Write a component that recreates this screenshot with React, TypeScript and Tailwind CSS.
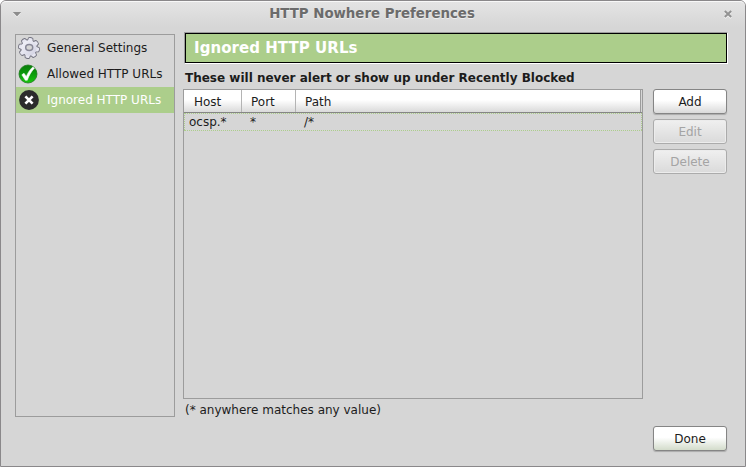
import React from "react";

function Gear() {
  const teeth = Array.from({ length: 8 }, (_, i) => i * 45 + 10);
  return (
    <svg width="24" height="24" viewBox="0 0 24 24">
      <defs>
        <linearGradient id="metal" x1="0" y1="0" x2="1" y2="1">
          <stop offset="0" stopColor="#f6f6fc" />
          <stop offset="1" stopColor="#cfcfe0" />
        </linearGradient>
      </defs>
      <g stroke="#70707e" strokeWidth="1.700" strokeLinejoin="round" fill="#ececf4">
        {teeth.map((a) => (
          <path key={a} d="M9.400 5.500 10.200 2.200Q12 1.400 13.800 2.200l.8 3.300z" transform={`rotate(${a} 12 12)`} />
        ))}
        <circle cx="12" cy="12" r="7.600" />
      </g>
      <g fill="#e6e6f0">
        {teeth.map((a) => (
          <path key={a} d="M9.400 6 10.200 2.200Q12 1.400 13.800 2.200l.8 3.800z" transform={`rotate(${a} 12 12)`} />
        ))}
      </g>
      <circle cx="12" cy="12" r="7.700" fill="url(#metal)" />
      <ellipse cx="12.200" cy="11.600" rx="3.500" ry="3" fill="#d6d6d6" stroke="#888898" strokeWidth="1.500" />
    </svg>
  );
}

function Check() {
  return (
    <svg width="20" height="20" viewBox="0 0 20 20" className="-ml-[2px]">
      <defs>
        <linearGradient id="green" x1="0" y1="0" x2="0" y2="1">
          <stop offset="0" stopColor="#0a7d0a" />
          <stop offset="0.5" stopColor="#0c9c0c" />
          <stop offset="1" stopColor="#19c80f" />
        </linearGradient>
      </defs>
      <circle cx="10" cy="10" r="9" fill="url(#green)" stroke="#1f7a1f" strokeWidth="0.8" />
      <path d="M3.800 10.800 6 9.200 8.300 12.400C10 8.500 12 5.500 14.800 3L16.400 4.200C13 8 11 11.500 9.300 16.300H7.300z" fill="#fff" stroke="#fff" strokeWidth="0.5" />
    </svg>
  );
}

function Cross() {
  return (
    <svg width="20" height="20" viewBox="0 0 20 20">
      <circle cx="10" cy="10" r="9.900" fill="#2b2b2b" />
      <path d="M6.400 6.400 13.600 13.600M13.600 6.400 6.400 13.600" stroke="#fff" strokeWidth="2.700" />
    </svg>
  );
}

function Item({ icon, label, selected }: { icon: React.ReactNode; label: string; selected?: boolean }) {
  return (
    <div className={`flex h-[26px] items-center ${selected ? "bg-[#acce8b] text-white" : ""}`}>
      <span className="flex w-[26px] justify-center">{icon}</span>
      <span className="ml-[5px]">{label}</span>
    </div>
  );
}

function Button({ label, disabled, primary }: { label: string; disabled?: boolean; primary?: boolean }) {
  const tone = disabled
    ? "border-[#ababab] bg-linear-to-b from-[#f0f0f0] to-[#dadada] text-[#a4a4a4] shadow-[inset_0_0_0_1px_#ececec]"
    : primary
      ? "border-[#858585] bg-linear-to-b from-white from-45% to-[#d3dccb] text-[#1c1c1c] shadow-[0_1px_1px_#aaa]"
      : "border-[#858585] bg-linear-to-b from-white from-45% to-[#dadada] text-[#1c1c1c] shadow-[0_1px_1px_#aaa]";
  return (
    <button className={`block h-[25px] w-[74px] rounded-[3px] border pt-px leading-[22px] ${tone}`} disabled={disabled}>
      {label}
    </button>
  );
}

export default function App() {
  return (
    <div className="h-[467px] w-[746px] bg-white">
      <div className="flex h-full flex-col rounded-t-[6px] border border-[#8a888a] bg-[#d6d6d6] font-['DejaVu_Sans',sans-serif] text-[12px] leading-[16px] text-[#1c1c1c]">
        <header className="flex h-[26px] shrink-0 items-center justify-between rounded-t-[5px] border-t border-[#f8f8f8] bg-linear-to-b from-[#e4e4e4] to-[#d6d6d6] pr-[12px] pb-[2px] pl-[11px]">
          <svg width="10" height="7" viewBox="0 0 10 7" className="mt-px">
            <path d="M1 2h8L5 6.500z" fill="#f4f4f4" />
            <path d="M.8 1h8.400L5 5.400z" fill="#8c8c8c" />
          </svg>
          <h1 className="mr-px text-[13.330px] font-bold text-[#6b6b6b] [text-shadow:0_1px_0_#eeeeee]">HTTP Nowhere Preferences</h1>
          <svg width="10" height="10" viewBox="0 0 10 10" className="mt-px">
            <path d="M1.800 3 8.200 9M8.200 3 1.800 9" stroke="#f5f5f5" strokeWidth="2" />
            <path d="M1.800 2 8.200 8M8.200 2 1.800 8" stroke="#929292" strokeWidth="2" />
          </svg>
        </header>
        <div className="flex items-start pl-[14px]">
          <nav className="mt-[7px] h-[383px] w-[160px] border border-[#9c9c9c]">
            <Item icon={<Gear />} label="General Settings" />
            <Item icon={<Check />} label="Allowed HTTP URLs" />
            <Item icon={<Cross />} label="Ignored HTTP URLs" selected />
          </nav>
          <main className="ml-[8px] w-[545px] pt-[5px]">
            <div className="ml-px w-[544px] border border-t-[#9c9c9c] border-r-white border-b-white border-l-[#9c9c9c]">
              <h2 className="h-[30px] border border-black bg-[#acce8b] pl-[8px] text-[15px] leading-[28px] font-bold tracking-[0.05px] text-white">
                Ignored HTTP URLs
              </h2>
            </div>
            <p className="mt-[6px] h-[19px] pl-[2px] font-bold">These will never alert or show up under Recently Blocked</p>
            <div className="flex gap-[10px]">
              <div className="h-[310px] w-[460px] border border-[#9c9c9c]">
                <div className="flex h-[23px] border-b border-[#858585] bg-linear-to-b from-white from-45% to-[#dadada]">
                  <div className="w-[58px] border-r border-[#b4b4b4] pt-[4px] pl-[10px]">Host</div>
                  <div className="w-[54px] border-r border-[#b4b4b4] pt-[4px] pl-[9px]">Port</div>
                  <div className="flex-1 pt-[4px] pl-[9px]">Path</div>
                  <div className="w-[2px] border-l border-[#9c9c9c] bg-[#d6d6d6]" />
                </div>
                <div className="flex h-[18px] justify-between border-y border-dotted border-[#acce8b]">
                  <div className="w-px bg-[repeating-linear-gradient(to_bottom,#d6d6d6_0_1px,#acce8b_1px_2px)]" />
                  <div className="flex flex-1">
                    <span className="w-[61px] pl-[4px]">ocsp.*</span>
                    <span className="w-[54px] pl-[4px]">*</span>
                    <span className="pl-[4px]">/*</span>
                  </div>
                  <div className="w-px bg-[repeating-linear-gradient(to_bottom,#d6d6d6_0_1px,#acce8b_1px_2px)]" />
                </div>
              </div>
              <div className="flex flex-col gap-[5px]">
                <Button label="Add" />
                <Button label="Edit" disabled />
                <Button label="Delete" disabled />
              </div>
            </div>
            <p className="mt-[3px] pl-[2px]">(* anywhere matches any value)</p>
            <div className="mt-[8px] flex justify-end pr-px">
              <Button label="Done" primary />
            </div>
          </main>
        </div>
      </div>
    </div>
  );
}
